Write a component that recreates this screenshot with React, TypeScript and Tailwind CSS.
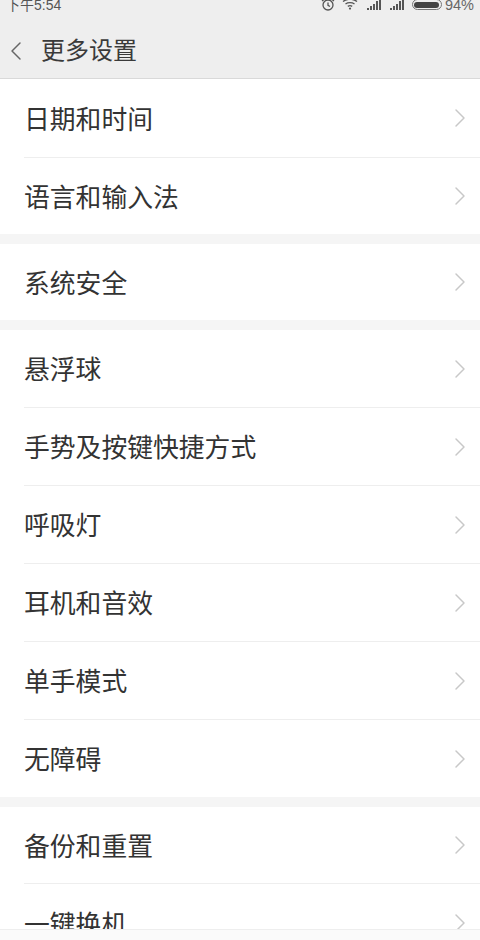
import React from 'react';
import { ChevronLeft, ChevronRight } from 'lucide-react';

const groups = [
  [
    { label: '日期和时间', height: 'h-[79px]' },
    { label: '语言和输入法', height: 'h-[76px]' },
  ],
  [{ label: '系统安全', height: 'h-[76px]' }],
  [
    { label: '悬浮球', height: 'h-[78px]' },
    { label: '手势及按键快捷方式', height: 'h-[78px]' },
    { label: '呼吸灯', height: 'h-[78px]' },
    { label: '耳机和音效', height: 'h-[78px]' },
    { label: '单手模式', height: 'h-[78px]' },
    { label: '无障碍', height: 'h-[77px]' },
  ],
  [
    { label: '备份和重置', height: 'h-[77px]' },
    { label: '一键换机', height: 'h-[78px]' },
  ],
];

const SignalIcon = () => (
  <svg width="16" height="12" viewBox="0 0 16 12" fill="#555">
    <rect x="0" y="9" width="2" height="2" />
    <rect x="3" y="7" width="2" height="4" />
    <rect x="6" y="5" width="2" height="6" />
    <rect x="9" y="2" width="2" height="9" />
    <rect x="12" y="0" width="2" height="11" />
  </svg>
);

const StatusBar = () => (
  <div className="h-[24px] flex items-start justify-between pl-[6px] pr-[6px] text-[14px] leading-[12px] text-[#555] -mt-[1px]">
    <span>下午5:54</span>
    <div className="flex items-start">
      <svg width="14" height="13" viewBox="0 0 14 13" fill="none" stroke="#555" strokeWidth="1.3">
        <circle cx="7" cy="6" r="5" />
        <path d="M7 3.5V6.3L9 7.5M1 2L3 .5M13 2L11 .5" />
      </svg>
      <svg className="ml-[7px]" width="16" height="11" viewBox="0 0 16 11" fill="none" stroke="#555" strokeWidth="1.3">
        <path d="M1 2.5C5 -0.5 11 -0.5 15 2.5M3.5 5C6 3.2 10 3.2 12.5 5M5.8 7.4C7 6.6 9 6.6 10.2 7.4" />
        <circle cx="8" cy="9.6" r="1.1" fill="#555" stroke="none" />
      </svg>
      <span className="ml-[9px]"><SignalIcon /></span>
      <span className="ml-[7px]"><SignalIcon /></span>
      <div className="ml-[6px] w-[30px] h-[11px] rounded-full border border-[#777] p-[1.5px]">
        <div className="w-full h-full rounded-full bg-[#444]" />
      </div>
      <span className="ml-[3px] text-[14.5px] text-[#666]">94%</span>
    </div>
  </div>
);

export default function App() {
  return (
    <div
      className="w-[480px] h-[940px] overflow-hidden bg-[#fafafa] flex flex-col"
      style={{ fontFamily: '"Liberation Sans", "Noto Sans CJK SC", sans-serif' }}
    >
      <header className="h-[79px] shrink-0 bg-[#eeeeee] border-b border-[#d9d9d9]">
        <StatusBar />
        <div className="flex items-center h-[54px] pt-[2px]">
          <ChevronLeft className="w-[32px] h-[32px] text-[#666]" strokeWidth={1.1} />
          <h1 className="ml-[9px] text-[24px] font-normal text-[#3a3a3a]">更多设置</h1>
        </div>
      </header>

      <main className="h-[850px] shrink-0 overflow-hidden flex flex-col gap-[10px] bg-[#f5f5f5]">
        {groups.map((rows, i) => (
          <section key={i} className="shrink-0 bg-white">
            {rows.map((row, j) => (
              <div key={row.label} className={`${row.height} pl-[24px]`}>
                <div className={`h-full flex items-center justify-between pr-[4px] ${j < rows.length - 1 ? 'border-b border-[#eeeeee]' : ''}`}>
                  <span className="pt-[4px] text-[25.8px] text-[#333333]">{row.label}</span>
                  <ChevronRight className="w-[32px] h-[32px] text-[#c8c8c8]" strokeWidth={1.1} />
                </div>
              </div>
            ))}
          </section>
        ))}
      </main>

      <div className="flex-1 border-t border-[#eeeeee]" />
    </div>
  );
}
